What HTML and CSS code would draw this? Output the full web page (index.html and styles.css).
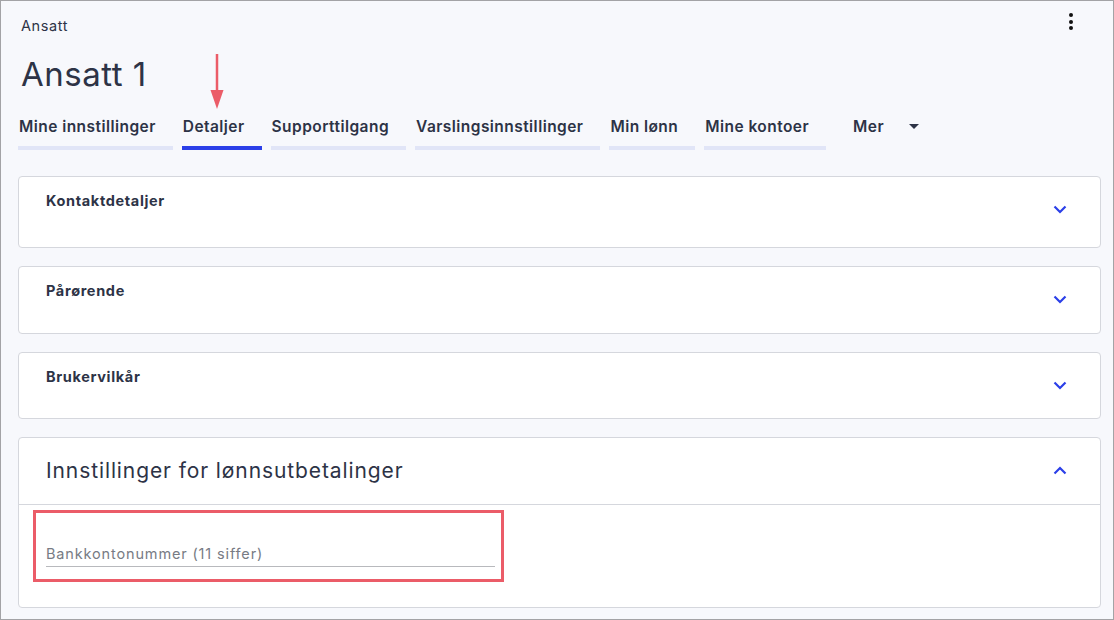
FILE: index.html
```html
<!DOCTYPE html>
<html lang="no">
<head>
<meta charset="utf-8">
<title>Ansatt 1</title>
<link rel="stylesheet" href="styles.css">
</head>
<body>
<div class="frame">
  <div class="top">
    <div class="crumb">Ansatt</div>
    <div class="kebab"><span></span><span></span><span></span></div>
  </div>
  <h1 class="title">Ansatt 1</h1>
  <nav class="tabs">
    <div class="tab">Mine innstillinger</div>
    <div class="tab active">Detaljer
      <svg class="arrow" width="16" height="58" viewBox="0 0 16 58"><line x1="8" y1="0" x2="8" y2="40" stroke="#eb5c68" stroke-width="2.5"/><polygon points="1.5,36 14.5,36 8,55" fill="#eb5c68"/></svg>
    </div>
    <div class="tab">Supporttilgang</div>
    <div class="tab">Varslingsinnstillinger</div>
    <div class="tab">Min lønn</div>
    <div class="tab">Mine kontoer</div>
    <div class="more">Mer <span class="caret"></span></div>
  </nav>

  <section class="card card-tall">
    <div class="card-head">
      <div class="card-title">Kontaktdetaljer</div>
      <svg class="chev" width="14" height="9" viewBox="0 0 14 9"><polyline points="1.5,1.5 7,7 12.5,1.5" fill="none" stroke="#2b3fe8" stroke-width="2.2"/></svg>
    </div>
  </section>
  <section class="card">
    <div class="card-head">
      <div class="card-title">Pårørende</div>
      <svg class="chev" width="14" height="9" viewBox="0 0 14 9"><polyline points="1.5,1.5 7,7 12.5,1.5" fill="none" stroke="#2b3fe8" stroke-width="2.2"/></svg>
    </div>
  </section>
  <section class="card card-short">
    <div class="card-head">
      <div class="card-title">Brukervilkår</div>
      <svg class="chev" width="14" height="9" viewBox="0 0 14 9"><polyline points="1.5,1.5 7,7 12.5,1.5" fill="none" stroke="#2b3fe8" stroke-width="2.2"/></svg>
    </div>
  </section>
  <section class="card open">
    <div class="open-head">
      <div class="open-title">Innstillinger for lønnsutbetalinger</div>
      <svg class="chev-up" width="14" height="9" viewBox="0 0 14 9"><polyline points="1.5,7.5 7,2 12.5,7.5" fill="none" stroke="#2b3fe8" stroke-width="2.2"/></svg>
    </div>
    <div class="open-body">
      <div class="highlight">
        <div class="field">Bankkontonummer (11 siffer)</div>
      </div>
    </div>
  </section>
</div>
</body>
</html>
```

FILE: styles.css
```css
* { box-sizing: border-box; }
html, body { margin: 0; padding: 0; }
body {
  font-family: Inter, "Noto Sans", "Liberation Sans", sans-serif;
  color: #2d3346;
  background: #f7f8fc;
}
.frame {
  width: 1114px;
  height: 620px;
  border: 1px solid #a3a3a6;
  background: #f7f8fc;
  padding: 15px 12px 0 17px;
  overflow: hidden;
}
.top {
  display: flex;
  justify-content: space-between;
  align-items: flex-start;
  padding-left: 3px;
}
.crumb {
  font-size: 14.5px;
  line-height: 20px;
  letter-spacing: 0.6px;
}
.kebab {
  display: flex;
  flex-direction: column;
  gap: 2.5px;
  margin-top: -3px;
  margin-right: 28px;
}
.kebab span {
  width: 4px;
  height: 4px;
  border-radius: 50%;
  background: #111;
}
.title {
  margin: 18px 0 0 3px;
  font-size: 33px;
  line-height: 40px;
  font-weight: 400;
  letter-spacing: 0.5px;
}
.tabs {
  display: flex;
  align-items: flex-start;
  gap: 9px;
  margin-top: 23px;
}
.tab {
  position: relative;
  font-size: 15.5px;
  font-weight: 600;
  line-height: 20px;
  letter-spacing: 0.45px;
  padding: 0 17px 9px 1px;
  border-bottom: 4px solid #e1e5f7;
  white-space: nowrap;
}
.tab.active { border-bottom-color: #2b3fe8; }
.arrow {
  position: absolute;
  left: 27px;
  top: -63px;
}
.more {
  display: flex;
  align-items: center;
  font-size: 15.5px;
  font-weight: 600;
  line-height: 20px;
  letter-spacing: 0.45px;
  margin-left: 18px;
  gap: 25px;
}
.caret {
  width: 0;
  height: 0;
  border-left: 5px solid transparent;
  border-right: 5px solid transparent;
  border-top: 5px solid #2d3346;
  margin-top: -2px;
}
.card {
  background: #fff;
  border: 1px solid #d5d7dd;
  border-radius: 4px;
  margin-top: 18px;
  width: 1083px;
}
.tabs + .card { margin-top: 26px; }
.card-head {
  display: flex;
  justify-content: space-between;
  align-items: flex-start;
  padding: 15px 33px 0 27px;
  height: 66px;
}
.card-tall .card-head { height: 70px; }
.card-short .card-head { height: 65px; }
.card-title {
  font-size: 14.5px;
  font-weight: 700;
  line-height: 18px;
  letter-spacing: 0.65px;
}
.chev { margin-top: 13px; }
.open-head {
  display: flex;
  justify-content: space-between;
  align-items: center;
  height: 67px;
  padding: 0 33px 0 27px;
  border-bottom: 1px solid #d5d7dd;
}
.open-title {
  font-size: 21px;
  font-weight: 400;
  line-height: 28px;
  letter-spacing: 0.9px;
}
.chev-up { margin-top: -2px; }
.open-body {
  padding: 5px 0 25px 14px;
}
.highlight {
  width: 471px;
  height: 72px;
  border: 3px solid #eb5c68;
  padding: 31px 6px 0 10px;
}
.field {
  font-size: 14.5px;
  line-height: 20px;
  color: #777b84;
  border-bottom: 1px solid #b8b9bd;
  padding-bottom: 2px;
  letter-spacing: 0.85px;
}
```
